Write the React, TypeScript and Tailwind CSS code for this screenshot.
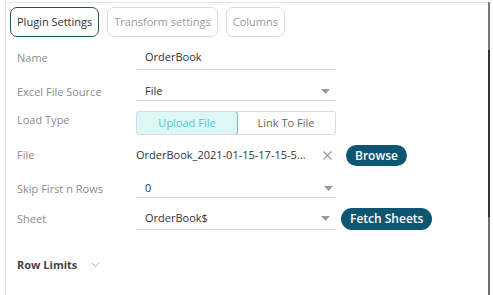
import React from 'react';

const Caret: React.FC<{ className?: string }> = ({ className }) => (
  <svg width="9" height="5" viewBox="0 0 9 5" className={className}>
    <path d="M0 0h9L4.5 5z" fill="#9a9a9a" />
  </svg>
);

const Label: React.FC<{ children: React.ReactNode }> = ({ children }) => (
  <div className="w-[119px] shrink-0 text-[#8c8c8c]">{children}</div>
);

const App: React.FC = () => {
  return (
    <div
      className="flex h-[295px] w-[493px] bg-white pl-[5px] pr-[3px] pt-[2px] text-[11px] text-[#333]"
      style={{ fontFamily: '"Open Sans", "Noto Sans", sans-serif' }}
    >
      <div className="flex-1 border-l border-t border-[#e3e3e3] pl-[4px] pt-[4px]">
        {/* tabs */}
        <div className="flex gap-[8px]">
          <button className="h-[30px] rounded-[7px] border border-[#1d5468] px-[6px] text-[#333]">Plugin Settings</button>
          <button className="h-[30px] rounded-[7px] border border-[#dcdcdc] px-[6px] text-[#9b9b9b]">Transform settings</button>
          <button className="h-[30px] rounded-[7px] border border-[#dcdcdc] px-[6px] text-[#9b9b9b]">Columns</button>
        </div>

        <div className="pl-[7px]">
          {/* Name */}
          <div className="mt-[9px] flex h-[24px] items-center">
            <Label>Name</Label>
            <div className="flex h-[24px] w-[200px] items-center border-b border-[#d6d6d6] pl-[9px]">OrderBook</div>
          </div>

          {/* Excel File Source */}
          <div className="mt-[13px] flex h-[18px] items-center">
            <Label>Excel File Source</Label>
            <div className="flex h-[18px] w-[200px] items-center justify-between border-b border-[#d6d6d6] pl-[9px] pr-[6px]">
              <span>File</span>
              <Caret />
            </div>
          </div>

          {/* Load Type */}
          <div className="mt-[10px] flex h-[24px] items-start">
            <div className="pt-[1px]">
              <Label>Load Type</Label>
            </div>
            <div className="flex h-[24px] w-[200px] overflow-hidden rounded-[3px] border border-[#dcdcdc]">
              <div className="-m-px flex w-[102px] items-center justify-center rounded-[3px] border border-[#3fd0d0] bg-[#ddf6f6] text-[#5bc4c8]">
                Upload File
              </div>
              <div className="flex flex-1 items-center justify-center text-[#666]">Link To File</div>
            </div>
          </div>

          {/* File */}
          <div className="mt-[10px] flex h-[21px] items-center">
            <Label>File</Label>
            <div className="flex w-[200px] items-center justify-between pr-[4px]">
              <span>OrderBook_2021-01-15-17-15-5...</span>
              <svg width="9" height="9" viewBox="0 0 9 9">
                <path d="M0.5 0.5l8 8M8.5 0.5l-8 8" stroke="#9a9a9a" strokeWidth="1.1" />
              </svg>
            </div>
            <button className="ml-[10px] h-[21px] rounded-full bg-[#0c5673] px-[9px] text-[12px] font-semibold text-white">Browse</button>
          </div>

          {/* Skip First n Rows */}
          <div className="mt-[14px] flex h-[18px] items-center">
            <Label>Skip First n Rows</Label>
            <div className="flex h-[18px] w-[200px] items-center justify-between border-b border-[#d6d6d6] pl-[9px] pr-[3px]">
              <span>0</span>
              <Caret />
            </div>
          </div>

          {/* Sheet */}
          <div className="mt-[10px] flex h-[22px] items-center">
            <Label>Sheet</Label>
            <div className="flex h-[22px] w-[200px] items-center justify-between border-b border-[#d6d6d6] pl-[9px] pr-[6px]">
              <span>OrderBook$</span>
              <Caret />
            </div>
            <button className="ml-[5px] h-[22px] rounded-full bg-[#0c5673] px-[9px] text-[12px] font-semibold text-white">Fetch Sheets</button>
          </div>

          {/* Row Limits */}
          <div className="mt-[26px] flex h-[18px] items-center gap-[14px]">
            <span className="font-bold text-[#444]">Row Limits</span>
            <svg width="9" height="6" viewBox="0 0 9 6">
              <path d="M1 1l3.5 3.5L8 1" fill="none" stroke="#aaa" strokeWidth="1" />
            </svg>
          </div>
        </div>
      </div>
      <div className="flex w-[2px] flex-col">
        <div className="h-[48px] bg-[#7a7a7a]" />
        <div className="h-[167px] bg-[#333]" />
        <div className="flex-1 bg-[#6e6e6e]" />
      </div>
    </div>
  );
};

export default App;
